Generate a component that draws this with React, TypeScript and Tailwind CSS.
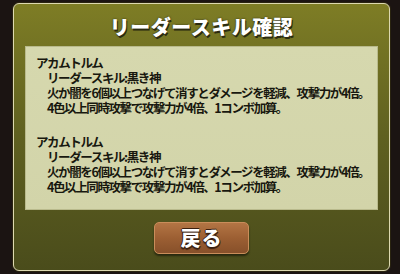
const font = { fontFamily: '"Noto Sans CJK JP", "Noto Sans", sans-serif' };

interface SkillEntry {
  id: string;
  monster: string;
  skill: string;
  lines: string[];
}

const lineCls = 'text-[12.5px] leading-[15px] font-bold text-[#18180f] tracking-[-1.4px] whitespace-nowrap';

export default function App() {
  const entries: SkillEntry[] = [
    {
      id: '1',
      monster: 'アカムトルム',
      skill: 'リーダースキル:黒き神',
      lines: ['火か闇を6個以上つなげて消すとダメージを軽減、攻撃力が4倍。', '4色以上同時攻撃で攻撃力が4倍、1コンボ加算。'],
    },
    {
      id: '2',
      monster: 'アカムトルム',
      skill: 'リーダースキル:黒き神',
      lines: ['火か闇を6個以上つなげて消すとダメージを軽減、攻撃力が4倍。', '4色以上同時攻撃で攻撃力が4倍、1コンボ加算。'],
    },
  ];

  return (
    <div
      className="w-[400px] h-[274px] bg-[#1b1412] pt-[3px] pb-[3px] pl-[13px] pr-[10px] flex"
      style={font}
    >
      <div className="flex-1 flex flex-col rounded-[6px] border border-[#ddd9b0] bg-gradient-to-b from-[#7e7d25] via-[#5f6020] to-[#4a4c1b] shadow-[0_0_0_1px_#2a2410]">
        <div className="h-[42px] flex items-center justify-center pt-[4px]">
          <h1 className="text-[20px] font-black text-white tracking-[0.5px] [text-shadow:1px_2px_0_#2a2a10,0_0_2px_#2a2a10]">
            リーダースキル確認
          </h1>
        </div>

        <div className="mx-[11px] h-[164px] bg-gradient-to-b from-[#d6d8ae] to-[#d2d4a9] border border-[#b9ba8c] pl-[10px] pt-[8px] flex flex-col gap-[19px]">
          {entries.map((entry) => (
            <div key={entry.id}>
              <p className={lineCls}>{entry.monster}</p>
              <div className="pl-[11px]">
                <p className={lineCls}>{entry.skill}</p>
                {entry.lines.map((line) => (
                  <p key={line} className={lineCls}>
                    {line}
                  </p>
                ))}
              </div>
            </div>
          ))}
        </div>

        <div className="flex-1 flex items-center justify-center pb-[4px]">
          <button className="w-[95px] h-[32px] rounded-[5px] border border-[#c98d5a] bg-gradient-to-b from-[#b37544] via-[#9c5f33] to-[#87502a] shadow-[0_2px_2px_rgba(0,0,0,0.5)] flex items-center justify-center">
            <span className="text-[20px] font-black text-white tracking-[1px] [text-shadow:1px_1px_0_#3a2010,-1px_0_0_#3a2010,0_-1px_0_#3a2010,0_2px_1px_#3a2010]">
              戻る
            </span>
          </button>
        </div>
      </div>
    </div>
  );
}
